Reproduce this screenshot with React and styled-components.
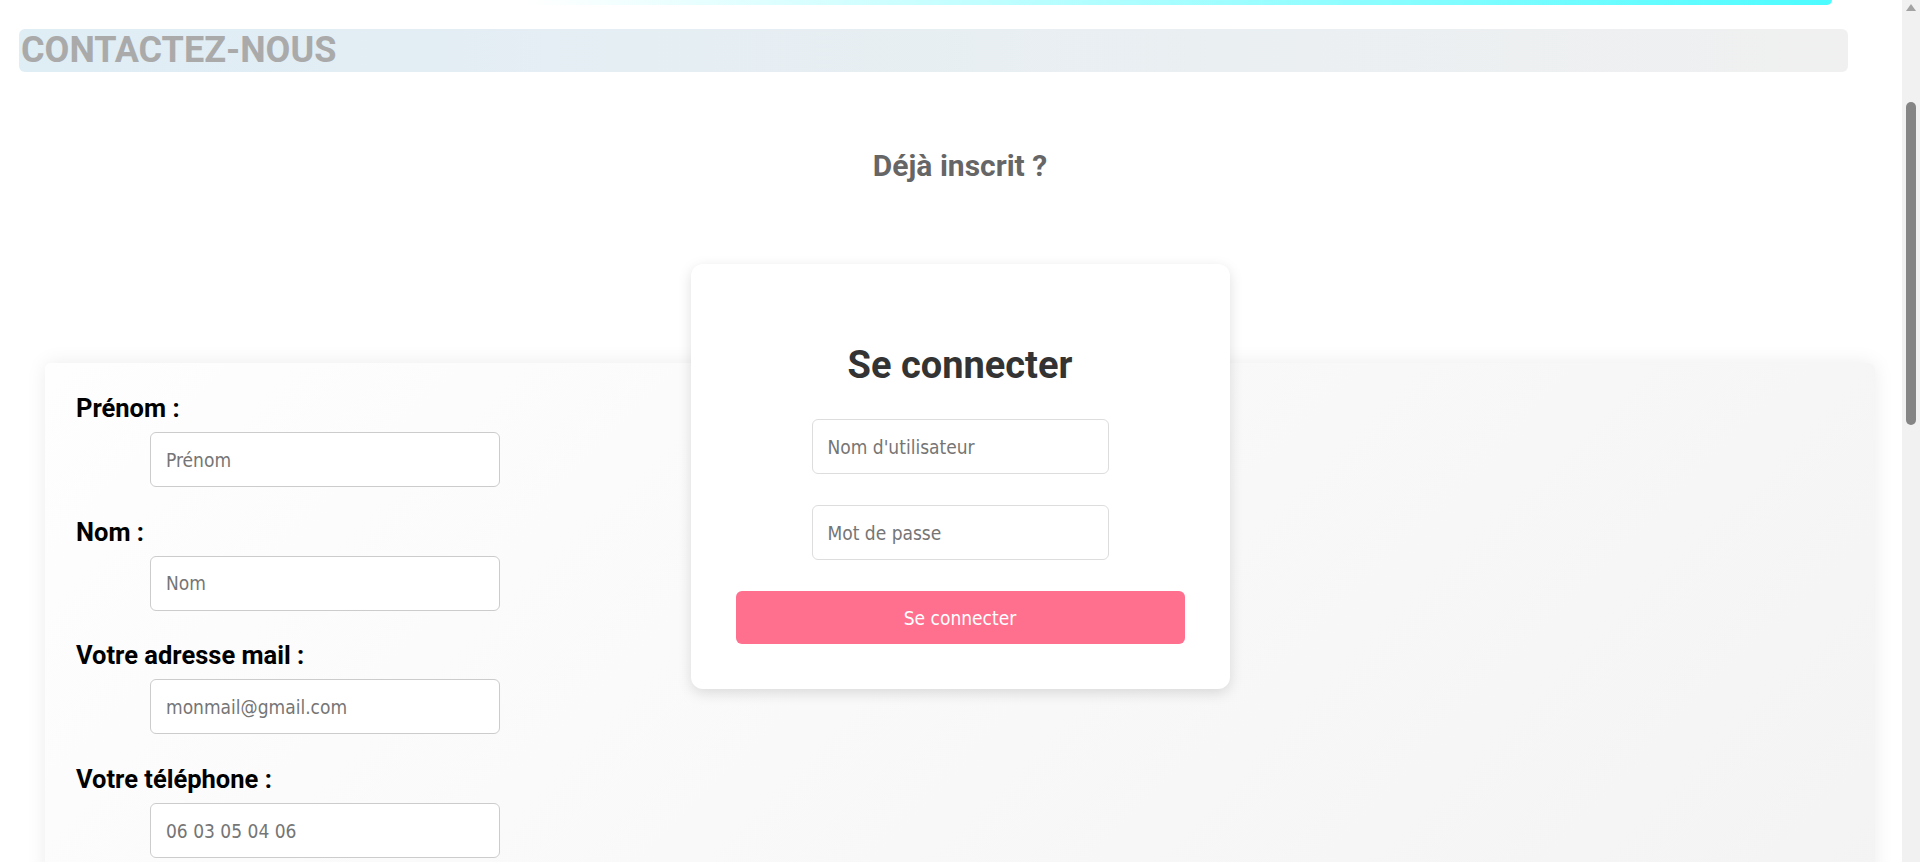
import styled, { createGlobalStyle } from "styled-components";

const GlobalStyle = createGlobalStyle`
  body {
    margin: 0;
    background: #ffffff;
    font-family: Roboto, "Liberation Sans", sans-serif;
  }
  * {
    box-sizing: border-box;
  }
`;

const Page = styled.div`
  padding-bottom: 60px;
`;

const TopBar = styled.div`
  height: 5px;
  margin-left: 19px;
  width: 1813px;
  border-radius: 0 0 12px 0;
  background: linear-gradient(90deg, #ffffff 28%, #4cfcff 100%);
`;

const SectionTitle = styled.h1`
  margin: 24px 72px 0 19px;
  height: 43px;
  padding-left: 2px;
  border-radius: 6px;
  background: linear-gradient(90deg, #dfedf5, #f0f0f0);
  color: #aaaaaa;
  font-size: 36px;
  font-weight: 700;
  line-height: 43px;
`;

const Content = styled.main`
  margin: 0 45px 0 45px;
`;

const LoginArea = styled.section`
  display: flex;
  flex-direction: column;
  align-items: center;
`;

const AlreadyTitle = styled.h2`
  margin: 76px 0 81px;
  color: #666666;
  font-size: 30px;
  font-weight: 700;
  line-height: 35px;
`;

const LoginCard = styled.form`
  position: relative;
  z-index: 1;
  width: 539px;
  margin-bottom: -326px;
  padding: 79px 45px 45px;
  display: flex;
  flex-direction: column;
  align-items: center;
  gap: 31px;
  background: #ffffff;
  border-radius: 12px;
  box-shadow: 0 4px 14px rgba(0, 0, 0, 0.13);
`;

const CardTitle = styled.h3`
  margin: 0 0 1px;
  color: #333333;
  font-size: 38px;
  font-weight: 700;
  line-height: 44px;
`;

const inputFont = `
  font-family: "DejaVu Sans Condensed", "DejaVu Sans", sans-serif;
  font-stretch: condensed;
  font-size: 19px;
`;

const TextInput = styled.input`
  ${inputFont}
  display: block;
  width: ${(p) => p.$width}px;
  height: 55px;
  margin-left: ${(p) => p.$indent || 0}px;
  padding: 0 15px;
  border: 1px solid ${(p) => p.$border};
  border-radius: 6px;
  background: #ffffff;
  color: #333;
  outline: none;

  &::placeholder {
    color: #757575;
  }
`;

const PinkButton = styled.button`
  ${inputFont}
  width: 100%;
  height: 53px;
  border: none;
  border-radius: 6px;
  background: #ff6f8e;
  color: #ffffff;
  cursor: pointer;
`;

const FormPanel = styled.form`
  padding: 30px 31px 40px;
  border-radius: 6px;
  background: linear-gradient(135deg, #fefefe, #f2f2f2);
  box-shadow: 0 0 20px rgba(0, 0, 0, 0.08);
`;

const Field = styled.div`
  margin-bottom: 29.7px;
`;

const Label = styled.label`
  display: block;
  margin-bottom: 8px;
  color: #000000;
  font-size: 25.5px;
  font-weight: 700;
  line-height: 31px;
`;

const MessageArea = styled.textarea`
  ${inputFont}
  display: block;
  width: 700px;
  height: 180px;
  margin-left: 74px;
  padding: 15px;
  border: 1px solid #cccccc;
  border-radius: 6px;
  resize: none;

  &::placeholder {
    color: #757575;
  }
`;

const SendButton = styled(PinkButton)`
  width: 350px;
  margin-left: 74px;
`;

/* drawing of the browser scrollbar seen on the right of the screenshot */
const ScrollTrack = styled.div`
  position: fixed;
  top: 0;
  right: 0;
  width: 18px;
  height: 100vh;
  background: #f1f1f1;
  z-index: 10;
`;

const ScrollArrow = styled.div`
  position: absolute;
  top: 4px;
  left: 4px;
  width: 0;
  height: 0;
  border-left: 5px solid transparent;
  border-right: 5px solid transparent;
  border-bottom: 7px solid #a3a3a3;
`;

const ScrollThumb = styled.div`
  position: absolute;
  top: 102px;
  left: 4px;
  width: 10px;
  height: 323px;
  border-radius: 5px;
  background: #858585;
`;

const fields = [
  { label: "Prénom :", placeholder: "Prénom", type: "text" },
  { label: "Nom :", placeholder: "Nom", type: "text" },
  { label: "Votre adresse mail :", placeholder: "monmail@gmail.com", type: "email" },
  { label: "Votre téléphone :", placeholder: "06 03 05 04 06", type: "tel" },
];

const App = () => {
  return (
    <Page>
      <GlobalStyle />
      <TopBar />
      <SectionTitle>CONTACTEZ-NOUS</SectionTitle>
      <Content>
        <LoginArea>
          <AlreadyTitle>Déjà inscrit ?</AlreadyTitle>
          <LoginCard onSubmit={(e) => e.preventDefault()}>
            <CardTitle>Se connecter</CardTitle>
            <TextInput $width={297} $border="#dddddd" placeholder="Nom d'utilisateur" />
            <TextInput $width={297} $border="#dddddd" type="password" placeholder="Mot de passe" />
            <PinkButton type="submit">Se connecter</PinkButton>
          </LoginCard>
        </LoginArea>
        <FormPanel onSubmit={(e) => e.preventDefault()}>
          {fields.map((f) => (
            <Field key={f.label}>
              <Label>{f.label}</Label>
              <TextInput $width={350} $indent={74} $border="#cccccc" type={f.type} placeholder={f.placeholder} />
            </Field>
          ))}
          <Field>
            <Label>Votre message :</Label>
            <MessageArea placeholder="Votre message" />
          </Field>
          <SendButton type="submit">Envoyer</SendButton>
        </FormPanel>
      </Content>
      <ScrollTrack>
        <ScrollArrow />
        <ScrollThumb />
      </ScrollTrack>
    </Page>
  );
};

export default App;
